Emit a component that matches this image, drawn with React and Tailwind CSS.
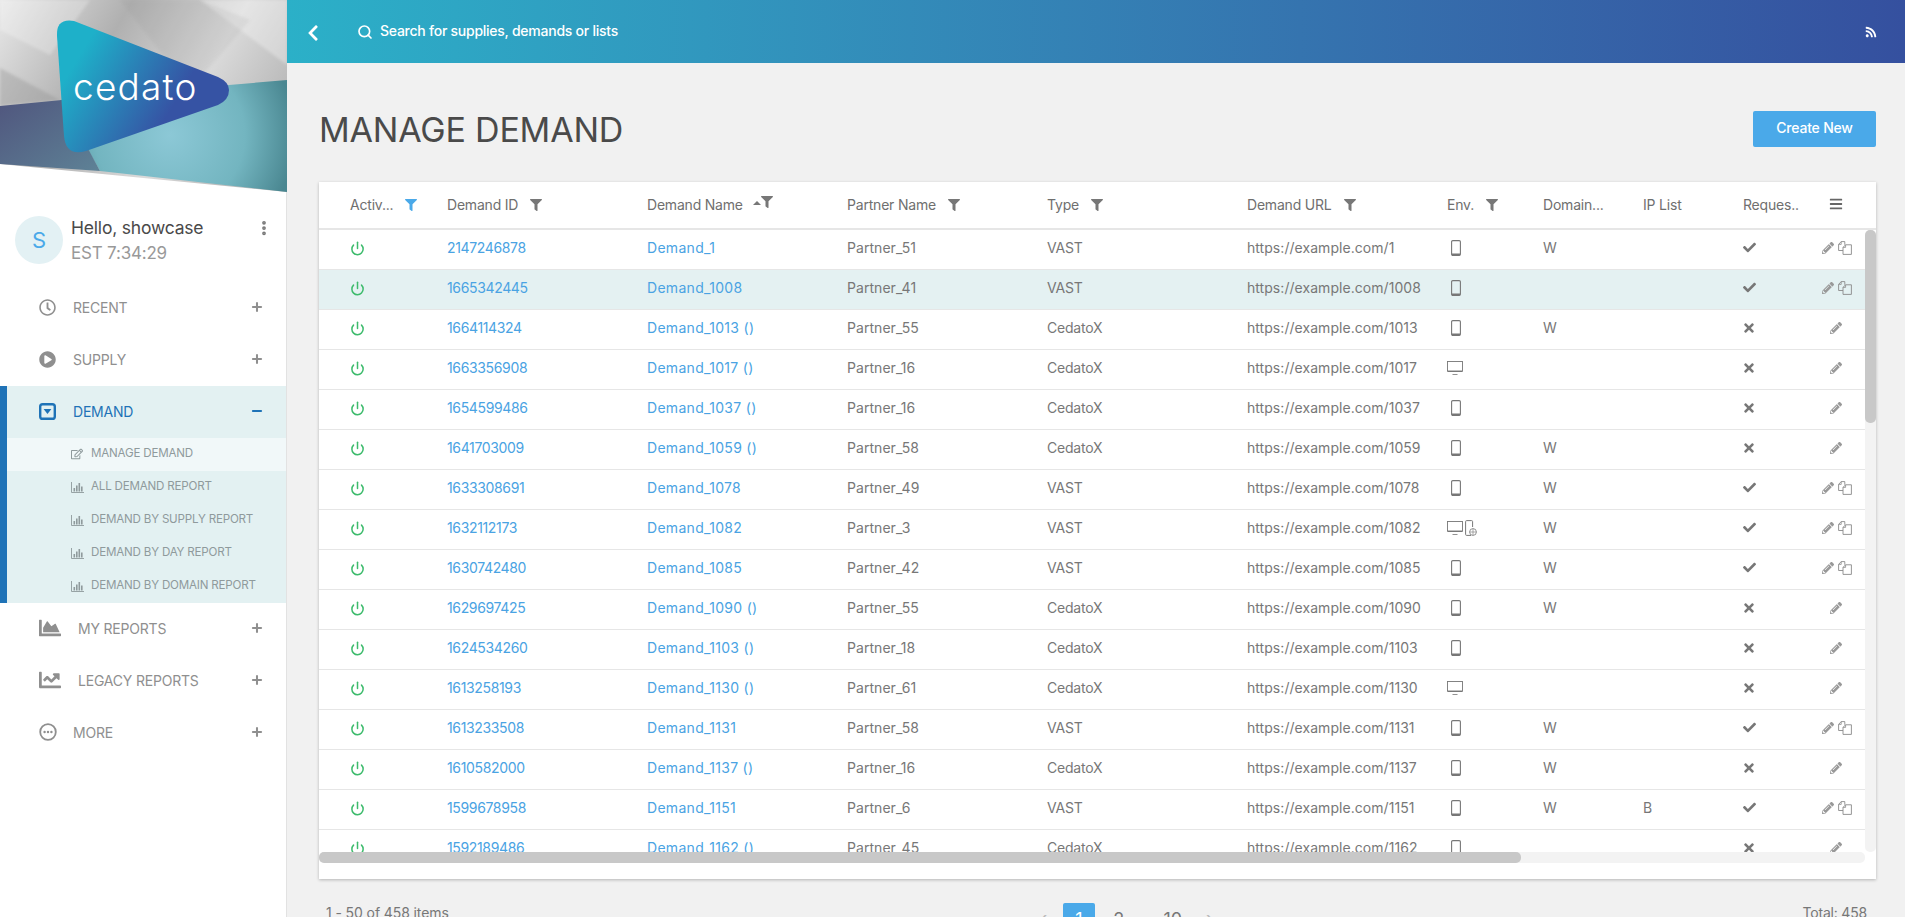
import { Power, Plus, Minus, MoreVertical, Search } from 'lucide-react';
import {
  FaFilter, FaBars, FaRss, FaPencilAlt, FaCheck, FaTimes, FaRegClock, FaPlayCircle,
  FaRegEdit, FaChartArea, FaChartLine, FaChevronLeft,
} from 'react-icons/fa';

const rows = [
  ['2147246878', 'Demand_1', 'Partner_51', 'VAST', 'https://example.com/1', 'm', 'W', '', true],
  ['1665342445', 'Demand_1008', 'Partner_41', 'VAST', 'https://example.com/1008', 'm', '', '', true],
  ['1664114324', 'Demand_1013 ()', 'Partner_55', 'CedatoX', 'https://example.com/1013', 'm', 'W', '', false],
  ['1663356908', 'Demand_1017 ()', 'Partner_16', 'CedatoX', 'https://example.com/1017', 'd', '', '', false],
  ['1654599486', 'Demand_1037 ()', 'Partner_16', 'CedatoX', 'https://example.com/1037', 'm', '', '', false],
  ['1641703009', 'Demand_1059 ()', 'Partner_58', 'CedatoX', 'https://example.com/1059', 'm', 'W', '', false],
  ['1633308691', 'Demand_1078', 'Partner_49', 'VAST', 'https://example.com/1078', 'm', 'W', '', true],
  ['1632112173', 'Demand_1082', 'Partner_3', 'VAST', 'https://example.com/1082', 'b', 'W', '', true],
  ['1630742480', 'Demand_1085', 'Partner_42', 'VAST', 'https://example.com/1085', 'm', 'W', '', true],
  ['1629697425', 'Demand_1090 ()', 'Partner_55', 'CedatoX', 'https://example.com/1090', 'm', 'W', '', false],
  ['1624534260', 'Demand_1103 ()', 'Partner_18', 'CedatoX', 'https://example.com/1103', 'm', '', '', false],
  ['1613258193', 'Demand_1130 ()', 'Partner_61', 'CedatoX', 'https://example.com/1130', 'd', '', '', false],
  ['1613233508', 'Demand_1131', 'Partner_58', 'VAST', 'https://example.com/1131', 'm', 'W', '', true],
  ['1610582000', 'Demand_1137 ()', 'Partner_16', 'CedatoX', 'https://example.com/1137', 'm', 'W', '', false],
  ['1599678958', 'Demand_1151', 'Partner_6', 'VAST', 'https://example.com/1151', 'm', 'W', 'B', true],
  ['1592189486', 'Demand_1162 ()', 'Partner_45', 'CedatoX', 'https://example.com/1162', 'm', '', '', false],
];

const colsClass = 'grid grid-cols-[97px_200px_200px_200px_200px_200px_96px_100px_100px_87px_1fr] pl-[31px]';

function Phone() {
  return (
    <svg width="10" height="16" viewBox="0 0 10 16" className="ml-[4px] text-[#777]" fill="none">
      <rect x="0.6" y="0.6" width="8.8" height="14.8" rx="1.2" stroke="currentColor" strokeWidth="1.1" />
      <path d="M1 13.6h8v1.2a.6.6 0 0 1-.6.6H1.6a.6.6 0 0 1-.6-.6z" fill="currentColor" />
    </svg>
  );
}

function Desktop() {
  return (
    <svg width="16" height="14" viewBox="0 0 16 14" className="text-[#777]" fill="none">
      <rect x="0.5" y="0.5" width="15" height="9.5" stroke="currentColor" strokeWidth="0.9" />
      <path d="M0.5 10h15v1H0.5z" fill="currentColor" />
      <path d="M5.5 13h5v.8h-5z" fill="currentColor" />
    </svg>
  );
}

function PhoneWeb() {
  return (
    <svg width="12" height="16" viewBox="0 0 12 16" className="text-[#777]" fill="none">
      <path d="M6 15.4H1.6a1 1 0 0 1-1-1V1.6a1 1 0 0 1 1-1h5a1 1 0 0 1 1 1V7" stroke="currentColor" strokeWidth="1" />
      <circle cx="8" cy="12" r="3.4" stroke="currentColor" strokeWidth="0.8" />
      <path d="M4.6 12h6.8M8 8.6v6.8" stroke="currentColor" strokeWidth="0.6" />
    </svg>
  );
}

function Files() {
  return (
    <svg width="14" height="14" viewBox="0 0 14 14" fill="none" className="text-[#8a8a8a]">
      <path d="M5 9.5H.6V3.4L3.2.6h3.6v3.2" stroke="currentColor" strokeWidth="0.9" />
      <path d="M5 13.4V6.4L7.6 3.8h5.8v9.6z" stroke="currentColor" strokeWidth="0.9" />
      <path d="M7.6 3.8v2.6H5M3.2.6v2.8H.6" stroke="currentColor" strokeWidth="0.8" />
    </svg>
  );
}

function BarChart() {
  return (
    <svg width="13" height="11" viewBox="0 0 13 11" fill="none" className="text-[#8f9a9c]">
      <path d="M.5 0v10.5H13" stroke="currentColor" strokeWidth="0.9" />
      <path d="M2.5 6h1.6v3.5H2.5zM5 3.5h1.6v6H5zM7.5 1h1.6v8.5H7.5zM10 4.5h1.6v5H10z" fill="currentColor" />
    </svg>
  );
}

function DemandIcon() {
  return (
    <svg width="17" height="17" viewBox="0 0 17 17" fill="none">
      <rect x="1.2" y="1.2" width="14.6" height="14.6" rx="2.4" stroke="currentColor" strokeWidth="2.4" />
      <path d="M4.6 6h7.8l-3.9 5z" fill="currentColor" />
    </svg>
  );
}

function MoreIcon() {
  return (
    <svg width="18" height="18" viewBox="0 0 18 18" fill="none">
      <circle cx="9" cy="9" r="7.8" stroke="currentColor" strokeWidth="1.8" />
      <circle cx="5.6" cy="9" r="1.2" fill="currentColor" />
      <circle cx="9" cy="9" r="1.2" fill="currentColor" />
      <circle cx="12.4" cy="9" r="1.2" fill="currentColor" />
    </svg>
  );
}

function Env({ kind }) {
  if (kind === 'm') return <Phone />;
  if (kind === 'd') return <Desktop />;
  return (
    <div className="flex items-center gap-[2px]">
      <Desktop />
      <PhoneWeb />
    </div>
  );
}

function HeadCell({ label, filter, active, sort }) {
  return (
    <div className="flex items-center text-[14px] text-[#6f6f6f] pb-[2px]">
      <span>{label}</span>
      {sort && <span className="ml-[10px] mt-[-2px] w-0 h-0 border-x-[4px] border-x-transparent border-b-[4px] border-b-[#777]" />}
      {filter && (
        <FaFilter
          size={12}
          className={`${sort ? 'ml-0 mt-[-5px]' : 'ml-[12px] mt-[2px]'} ${active ? 'text-[#4aa9e9]' : 'text-[#777]'}`}
        />
      )}
    </div>
  );
}

function Row({ row, highlighted }) {
  const [id, name, partner, type, url, env, dom, ip, req] = row;
  return (
    <div className={`${colsClass} h-[40px] shrink-0 items-center border-b border-[#e6e6e6] pb-[4px] text-[14px] text-[#777] ${highlighted ? 'bg-[#e4f1f2]' : ''}`}>
      <div className="pt-[2px]">
        <Power size={15} strokeWidth={2.4} className="text-[#3dbb6c]" />
      </div>
      <div className="text-[#4aa3e3] tracking-[-0.35px]">{id}</div>
      <div className="text-[#4aa3e3] tracking-[0.3px]">{name}</div>
      <div className="tracking-[0.05px]">{partner}</div>
      <div>{type}</div>
      <div className="tracking-[0.05px]">{url}</div>
      <div><Env kind={env} /></div>
      <div>{dom}</div>
      <div>{ip}</div>
      <div>
        {req ? <FaCheck size={13} className="text-[#777]" /> : <FaTimes size={14} className="ml-[-1px] text-[#777]" />}
      </div>
      <div className={`flex items-center gap-[4px] ${req ? 'ml-[-8px]' : 'ml-0'}`}>
        <FaPencilAlt size={12} className="text-[#999]" />
        {req && <Files />}
      </div>
    </div>
  );
}

function NavItem({ icon, label, open, wide }) {
  return (
    <div className={`flex items-center h-[52px] pr-[22px] text-[14px] uppercase ${open ? 'pl-[32px] pb-[2px] text-[#1f73b7]' : 'pl-[39px] text-[#8f8f8f]'}`}>
      <div className={`${wide ? 'w-[39px]' : 'w-[34px]'} flex items-center shrink-0`}>{icon}</div>
      <span className="flex-1">{label}</span>
      {open ? <Minus size={14} strokeWidth={3.5} /> : <Plus size={14} strokeWidth={3.5} />}
    </div>
  );
}

function SubItem({ icon, label, current }) {
  return (
    <div className={`flex items-center h-[33px] pl-[64px] pb-[1px] text-[11.6px] uppercase text-[#8f9a9c] ${current ? 'bg-[#f1f8f9]' : ''}`}>
      <div className="w-[20px] shrink-0 flex items-center">{icon}</div>
      <span className="whitespace-nowrap">{label}</span>
    </div>
  );
}

function Hero() {
  return (
    <svg width="287" height="193" viewBox="0 0 287 193" className="block shrink-0">
      <defs>
        <linearGradient id="grey" x1="0" y1="0" x2="1" y2="0.4">
          <stop offset="0" stopColor="#e8e8e8" />
          <stop offset="0.4" stopColor="#b0b0b0" />
          <stop offset="0.75" stopColor="#dadada" />
          <stop offset="1" stopColor="#bcbcbc" />
        </linearGradient>
        <radialGradient id="teal" cx="170" cy="135" r="125" gradientUnits="userSpaceOnUse">
          <stop offset="0" stopColor="#8cc8d6" />
          <stop offset="0.6" stopColor="#73b5c0" />
          <stop offset="1" stopColor="#4a8791" />
        </radialGradient>
        <linearGradient id="dusk" x1="0" y1="0" x2="1" y2="1">
          <stop offset="0" stopColor="#50567e" />
          <stop offset="1" stopColor="#5e8296" />
        </linearGradient>
        <linearGradient id="logo" x1="60" y1="40" x2="200" y2="125" gradientUnits="userSpaceOnUse">
          <stop offset="0.15" stopColor="#1eb0c9" />
          <stop offset="0.8" stopColor="#3653a4" />
        </linearGradient>
        <filter id="soft">
          <feGaussianBlur stdDeviation="1.5" />
        </filter>
      </defs>
      <path d="M0 0H287V192L0 164z" fill="url(#grey)" />
      <path d="M0 0 90 0 50 55 0 30z" fill="#ffffff" opacity="0.25" filter="url(#soft)" />
      <path d="M0 68 60 100 0 106z" fill="#8f8f8f" opacity="0.35" filter="url(#soft)" />
      <path d="M200 0 287 65 287 0z" fill="#ffffff" opacity="0.3" filter="url(#soft)" />
      <path d="M120 0 190 90 250 20 200 0z" fill="#8c8c8c" opacity="0.12" filter="url(#soft)" />
      <path d="M229 85 287 80 287 192 100 171 60 100z" fill="url(#teal)" />
      <path d="M0 106 62 100 100 171 0 164z" fill="url(#dusk)" />
      <path d="M57 36Q56 18 74 21L218 77Q229 82 229 90Q229 100 218 105L86 151Q66 157 64 136z" fill="url(#logo)" />
      <text x="73" y="100" fill="#ffffff" fontSize="37" fontWeight="300" letterSpacing="1.2" fontFamily="Inter, sans-serif">cedato</text>
    </svg>
  );
}

export default function App() {
  return (
    <div className="flex h-[917px] w-[1905px] overflow-hidden bg-[#f1f1f1] font-['Inter','Liberation_Sans',sans-serif] tracking-[-0.2px]">
      <aside className="w-[287px] shrink-0 bg-white border-r border-[#e2e2e2] flex flex-col">
        <Hero />
        <div className="flex items-start pl-[15px] pr-[13px] pt-[22px] h-[88px]">
          <div className="w-[48px] h-[48px] mt-[1px] rounded-full bg-[#e3f1f4] text-[#4aa9e9] text-[22px] flex items-center justify-center shrink-0">S</div>
          <div className="ml-[8px] flex-1">
            <div className="text-[17.5px] leading-[26px] text-[#4a4a4a]">Hello, showcase</div>
            <div className="text-[17px] leading-[25px] text-[#999]">EST 7:34:29</div>
          </div>
          <MoreVertical size={18} strokeWidth={3} className="text-[#777] mt-[4px]" />
        </div>
        <NavItem icon={<FaRegClock size={17} />} label="Recent" />
        <NavItem icon={<FaPlayCircle size={17} />} label="Supply" />
        <div className="border-l-[7px] border-[#1f73b7] bg-[#e3f1f2] mt-[1px]">
          <NavItem icon={<DemandIcon />} label="Demand" open />
          <SubItem icon={<FaRegEdit size={12} />} label="Manage Demand" current />
          <SubItem icon={<BarChart />} label="All Demand Report" />
          <SubItem icon={<BarChart />} label="Demand By Supply Report" />
          <SubItem icon={<BarChart />} label="Demand By Day Report" />
          <SubItem icon={<BarChart />} label="Demand By Domain Report" />
        </div>
        <div className="mt-[-1px]">
          <NavItem icon={<FaChartArea size={22} />} label="My Reports" wide />
          <NavItem icon={<FaChartLine size={22} />} label="Legacy Reports" wide />
          <NavItem icon={<MoreIcon />} label="More" />
        </div>
      </aside>

      <main className="flex-1 min-w-0 flex flex-col">
        <header className="h-[63px] shrink-0 flex items-center pl-[17px] pr-[28px] bg-gradient-to-r from-[#2bb0c8] to-[#35509f] text-white">
          <FaChevronLeft size={18} className="mt-[2px]" />
          <Search size={16} strokeWidth={2.5} className="ml-[35px]" />
          <span className="ml-[7px] text-[14px] font-medium mt-[-2px] tracking-[-0.25px]">Search for supplies, demands or lists</span>
          <FaRss size={12} className="ml-auto" />
        </header>

        <div className="pl-[32px] pr-[29px] flex-1 flex flex-col">
          <div className="h-[119px] shrink-0 flex items-center justify-between pt-[14px]">
            <h1 className="text-[34px] text-[#4a4a4a] font-normal">MANAGE DEMAND</h1>
            <button className="w-[123px] h-[36px] mb-[2px] pb-[2px] bg-[#4aa9e9] text-white text-[14px] font-medium rounded-[2px]">Create New</button>
          </div>

          <div className="bg-white shadow-[0_1px_3px_rgba(0,0,0,0.25)] shrink-0">
            <div className={`${colsClass} h-[48px] items-center border-b-2 border-[#e6e6e6]`}>
              <HeadCell label="Activ..." filter active />
              <HeadCell label="Demand ID" filter />
              <HeadCell label="Demand Name" filter sort />
              <HeadCell label="Partner Name" filter />
              <HeadCell label="Type" filter />
              <HeadCell label="Demand URL" filter />
              <HeadCell label="Env." filter />
              <HeadCell label="Domain..." />
              <HeadCell label="IP List" />
              <HeadCell label="Reques.." />
              <div className="pb-[2px] ml-[-1px]"><FaBars size={14} className="text-[#666]" /></div>
            </div>
            <div className="flex h-[622px]">
              <div className="flex-1 min-w-0 flex flex-col overflow-hidden">
                {rows.map((row, i) => (
                  <Row key={row[0]} row={row} highlighted={i === 1} />
                ))}
              </div>
              <div className="w-[11px] shrink-0 bg-[#f3f3f3] rounded-[5px]">
                <div className="h-[193px] bg-[#c8c8c8] rounded-[5px]" />
              </div>
            </div>
            <div className="h-[27px]">
              <div className="flex h-[11px] w-[1546px] bg-[#f3f3f3] rounded-[5px]">
                <div className="w-[1202px] bg-[#c8c8c8] rounded-[5px]" />
              </div>
            </div>
          </div>

          <div className="flex items-start mt-[24px] pl-[7px] pr-[9px] text-[14px] text-[#777]">
            <span className="leading-[20px] tracking-[-0.1px]">1 - 50 of 458 items</span>
            <div className="flex items-center ml-[591px] h-[32px] text-[18px]">
              <span className="w-[23px] text-[20px] text-[#bbb]">‹</span>
              <span className="w-[32px] h-[32px] bg-[#4aa9e9] text-white flex items-center justify-center rounded-[2px]">1</span>
              <span className="w-[48px] text-center">2</span>
              <span className="w-[12px] text-center text-[14px]">…</span>
              <span className="w-[36px] text-center">10</span>
              <span className="ml-[15px] text-[20px] text-[#bbb]">›</span>
            </div>
            <span className="ml-auto leading-[20px]">Total: 458</span>
          </div>
        </div>
      </main>
    </div>
  );
}
